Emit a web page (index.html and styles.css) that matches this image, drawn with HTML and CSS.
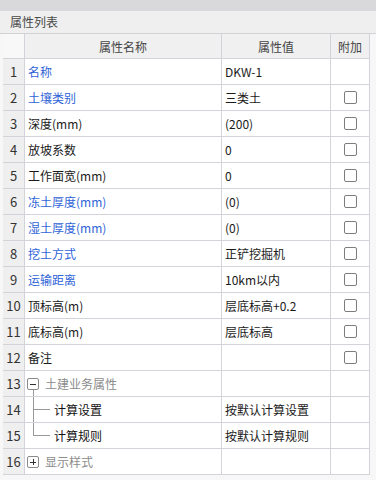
FILE: index.html
```html
<!DOCTYPE html>
<html lang="zh-CN">
<head>
  <meta charset="UTF-8">
  <meta name="viewport" content="width=device-width, initial-scale=1">
  <title>属性列表</title>
  <link rel="stylesheet" href="styles.css">
</head>
<body>

  <div class="panel">
    <div class="topbar"></div>
    <div class="titulo">属性列表</div>

    <div class="tabla">
      <div class="fila cabecera">
        <div class="c-no"></div>
        <div class="c-nombre">属性名称</div>
        <div class="c-valor">属性值</div>
        <div class="c-extra">附加</div>
      </div>

      <div class="fila">
        <div class="c-no">1</div>
        <div class="c-nombre azul">名称</div>
        <div class="c-valor">DKW-1</div>
        <div class="c-extra"></div>
      </div>
      <div class="fila">
        <div class="c-no">2</div>
        <div class="c-nombre azul">土壤类别</div>
        <div class="c-valor">三类土</div>
        <div class="c-extra"><span class="check"></span></div>
      </div>
      <div class="fila">
        <div class="c-no">3</div>
        <div class="c-nombre">深度(mm)</div>
        <div class="c-valor">(200)</div>
        <div class="c-extra"><span class="check"></span></div>
      </div>
      <div class="fila">
        <div class="c-no">4</div>
        <div class="c-nombre">放坡系数</div>
        <div class="c-valor">0</div>
        <div class="c-extra"><span class="check"></span></div>
      </div>
      <div class="fila">
        <div class="c-no">5</div>
        <div class="c-nombre">工作面宽(mm)</div>
        <div class="c-valor">0</div>
        <div class="c-extra"><span class="check"></span></div>
      </div>
      <div class="fila">
        <div class="c-no">6</div>
        <div class="c-nombre azul">冻土厚度(mm)</div>
        <div class="c-valor">(0)</div>
        <div class="c-extra"><span class="check"></span></div>
      </div>
      <div class="fila">
        <div class="c-no">7</div>
        <div class="c-nombre azul">湿土厚度(mm)</div>
        <div class="c-valor">(0)</div>
        <div class="c-extra"><span class="check"></span></div>
      </div>
      <div class="fila">
        <div class="c-no">8</div>
        <div class="c-nombre azul">挖土方式</div>
        <div class="c-valor">正铲挖掘机</div>
        <div class="c-extra"><span class="check"></span></div>
      </div>
      <div class="fila">
        <div class="c-no">9</div>
        <div class="c-nombre azul">运输距离</div>
        <div class="c-valor">10km以内</div>
        <div class="c-extra"><span class="check"></span></div>
      </div>
      <div class="fila">
        <div class="c-no">10</div>
        <div class="c-nombre">顶标高(m)</div>
        <div class="c-valor">层底标高+0.2</div>
        <div class="c-extra"><span class="check"></span></div>
      </div>
      <div class="fila">
        <div class="c-no">11</div>
        <div class="c-nombre">底标高(m)</div>
        <div class="c-valor">层底标高</div>
        <div class="c-extra"><span class="check"></span></div>
      </div>
      <div class="fila">
        <div class="c-no">12</div>
        <div class="c-nombre">备注</div>
        <div class="c-valor"></div>
        <div class="c-extra"><span class="check"></span></div>
      </div>

      <!-- grupo desplegado -->
      <div class="fila">
        <div class="c-no">13</div>
        <div class="c-nombre grupo">
          <span class="nodo abierto">
            <svg width="12" height="12" viewBox="0 0 12 12"><rect x="0.5" y="0.5" width="11" height="11" rx="1.5" fill="#fff" stroke="#8a8a8a"/><line x1="3" y1="6.5" x2="9" y2="6.5" stroke="#333"/></svg>
          </span>
          <span class="txt-grupo">土建业务属性</span>
        </div>
        <div class="c-valor"></div>
        <div class="c-extra"></div>
      </div>
      <div class="fila">
        <div class="c-no">14</div>
        <div class="c-nombre grupo">
          <span class="rama medio"></span>
          <span class="txt-hijo">计算设置</span>
        </div>
        <div class="c-valor">按默认计算设置</div>
        <div class="c-extra"></div>
      </div>
      <div class="fila">
        <div class="c-no">15</div>
        <div class="c-nombre grupo">
          <span class="rama fin"></span>
          <span class="txt-hijo">计算规则</span>
        </div>
        <div class="c-valor">按默认计算规则</div>
        <div class="c-extra"></div>
      </div>

      <!-- grupo cerrado -->
      <div class="fila">
        <div class="c-no">16</div>
        <div class="c-nombre grupo">
          <span class="nodo">
            <svg width="12" height="12" viewBox="0 0 12 12"><rect x="0.5" y="0.5" width="11" height="11" rx="1.5" fill="#fff" stroke="#8a8a8a"/><line x1="3" y1="6.5" x2="9" y2="6.5" stroke="#333"/><line x1="6.5" y1="3" x2="6.5" y2="9" stroke="#333"/></svg>
          </span>
          <span class="txt-grupo">显示样式</span>
        </div>
        <div class="c-valor"></div>
        <div class="c-extra"></div>
      </div>
    </div>
  </div>

</body>
</html>
```

FILE: styles.css
```css
* {
  margin: 0;
  padding: 0;
  box-sizing: border-box;
}

body {
  font-family: "Noto Sans CJK SC", "Microsoft YaHei", sans-serif;
  font-size: 12px;
  background-color: #f7f7f7;
  color: #1a1a1a;
}

.panel {
  width: 376px;
  height: 480px;
  overflow: hidden;
}

.topbar {
  height: 11px;
  background-color: #d9d9dc;
}

.titulo {
  height: 23px;
  line-height: 22px;
  padding-left: 10px;
  background-color: #efefef;
  border-bottom: 1px solid #d2d2d6;
  color: #4a4a4a;
  font-size: 12px;
}

.tabla {
  margin-left: 3px;
  width: 367px;
}

.fila {
  display: flex;
  height: 26px;
}

.fila > div {
  display: flex;
  align-items: center;
  border-right: 1px solid #d3d3da;
  border-bottom: 1px solid #d3d3da;
  background-color: #fff;
  white-space: nowrap;
}

.c-no {
  width: 22px;
  justify-content: center;
  font-size: 13px;
  color: #333;
  background-color: #efefef !important;
}

.c-nombre {
  width: 197px;
  padding-left: 3px;
}

.c-valor {
  width: 109px;
  padding-left: 3px;
}

.c-extra {
  width: 39px;
  justify-content: center;
}

.cabecera {
  height: 25px;
}

.cabecera > div {
  background-color: #f0f0f0;
  color: #444;
  justify-content: center;
  padding-left: 0;
}

.cabecera .c-no {
  background-color: #f8f8f8 !important;
}

.azul {
  color: #2f64d8;
}

.check {
  width: 13px;
  height: 13px;
  border: 1px solid #7d7d7d;
  border-radius: 2px;
  background-color: #fff;
}

/* arbol de grupos */
.fila > .grupo {
  align-items: stretch;
  padding-left: 0;
}

.nodo {
  width: 12px;
  margin-left: 2px;
  display: flex;
  align-items: center;
}

.nodo svg {
  display: block;
}

.nodo.abierto {
  background: linear-gradient(#999, #999) 6px 100% / 1px 50% no-repeat;
}

.txt-grupo {
  display: flex;
  align-items: center;
  margin-left: 6px;
  color: #8c8c8c;
}

.rama {
  width: 17px;
  margin-left: 8px;
}

.rama.medio {
  background:
    linear-gradient(#999, #999) 0 0 / 1px 100% no-repeat,
    linear-gradient(#999, #999) 0 50% / 100% 1px no-repeat;
}

.rama.fin {
  background:
    linear-gradient(#999, #999) 0 0 / 1px 50% no-repeat,
    linear-gradient(#999, #999) 0 50% / 100% 1px no-repeat;
}

.txt-hijo {
  display: flex;
  align-items: center;
  margin-left: 4px;
  color: #111;
}
```
